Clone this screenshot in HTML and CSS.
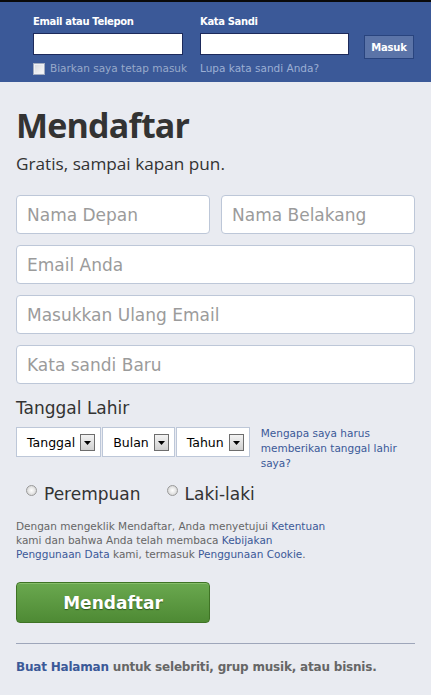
FILE: index.html
```html
<!DOCTYPE html>
<html lang="id">
<head>
<meta charset="utf-8">
<title>Mendaftar</title>
<link rel="stylesheet" href="styles.css">
</head>
<body>
<header class="topbar">
  <form class="login">
    <div class="login-col login-col-email">
      <label class="login-label">Email atau Telepon</label>
      <input class="login-input" type="text">
      <div class="keep">
        <span class="keep-box"></span>
        <span class="keep-text">Biarkan saya tetap masuk</span>
      </div>
    </div>
    <div class="login-col login-col-pass">
      <label class="login-label">Kata Sandi</label>
      <input class="login-input" type="password">
      <a class="forgot" href="#">Lupa kata sandi Anda?</a>
    </div>
    <button class="login-btn" type="button">Masuk</button>
  </form>
</header>

<main class="signup">
  <h1 class="title">Mendaftar</h1>
  <p class="subtitle">Gratis, sampai kapan pun.</p>

  <div class="fields">
    <div class="name-row">
      <input class="field" type="text" placeholder="Nama Depan">
      <input class="field" type="text" placeholder="Nama Belakang">
    </div>
    <input class="field" type="text" placeholder="Email Anda">
    <input class="field" type="text" placeholder="Masukkan Ulang Email">
    <input class="field" type="password" placeholder="Kata sandi Baru">
  </div>

  <h2 class="birth-title">Tanggal Lahir</h2>
  <div class="birth-row">
    <div class="selects">
      <div class="sel"><span>Tanggal</span><svg class="arrow" width="15" height="17" viewBox="0 0 15 17"><defs><linearGradient id="ag" x1="0" y1="0" x2="0" y2="1"><stop offset="0" stop-color="#f4f4f4"/><stop offset="1" stop-color="#cfcfcf"/></linearGradient></defs><rect x="0.5" y="0.5" width="14" height="16" fill="url(#ag)" stroke="#6d6d6d"/><path d="M4 7h7l-3.5 4z" fill="#000"/></svg></div>
      <div class="sel"><span>Bulan</span><svg class="arrow" width="15" height="17" viewBox="0 0 15 17"><rect x="0.5" y="0.5" width="14" height="16" fill="url(#ag)" stroke="#6d6d6d"/><path d="M4 7h7l-3.5 4z" fill="#000"/></svg></div>
      <div class="sel"><span>Tahun</span><svg class="arrow" width="15" height="17" viewBox="0 0 15 17"><rect x="0.5" y="0.5" width="14" height="16" fill="url(#ag)" stroke="#6d6d6d"/><path d="M4 7h7l-3.5 4z" fill="#000"/></svg></div>
    </div>
    <a class="why" href="#">Mengapa saya harus memberikan tanggal lahir saya?</a>
  </div>

  <div class="gender">
    <label class="radio"><span class="radio-dot"></span><span>Perempuan</span></label>
    <label class="radio"><span class="radio-dot"></span><span>Laki-laki</span></label>
  </div>

  <p class="terms">Dengan mengeklik Mendaftar, Anda menyetujui <a href="#">Ketentuan</a> kami dan bahwa Anda telah membaca <a href="#">Kebijakan Penggunaan Data</a> kami, termasuk <a href="#">Penggunaan Cookie</a>.</p>

  <button class="submit" type="button">Mendaftar</button>

  <hr class="divider">

  <p class="pages"><a href="#">Buat Halaman</a> untuk selebriti, grup musik, atau bisnis.</p>
</main>
</body>
</html>
```

FILE: styles.css
```css
html {
  background: #e9ebf1;
}
body {
  margin: 0;
  background: #e9ebf1;
  font-family: "DejaVu Sans", Verdana, sans-serif;
  color: #333;
}
a {
  text-decoration: none;
  color: #3b5998;
}

/* ---------- top bar ---------- */
.topbar {
  background: #3b5998;
  border-top: 2px solid #0a0a0a;
  height: 82px;
  box-sizing: border-box;
  padding: 14px 0 0 33px;
}
.login {
  display: flex;
  align-items: flex-start;
}
.login-col {
  display: flex;
  flex-direction: column;
}
.login-col-email {
  width: 150px;
  margin-right: 17px;
}
.login-col-pass {
  width: 149px;
  margin-right: 15px;
}
.login-label {
  font-weight: bold;
  font-size: 10px;
  letter-spacing: -0.35px;
  line-height: 12px;
  color: #fff;
  margin-bottom: 5px;
}
.login-input {
  box-sizing: border-box;
  width: 100%;
  height: 22px;
  margin: 0;
  border: 1px solid #1d2a5b;
  background: #fff;
  padding: 0 3px;
}
.keep {
  display: flex;
  align-items: center;
  margin-top: 7px;
  gap: 5px;
  white-space: nowrap;
}
.keep-box {
  flex: none;
  width: 12px;
  height: 12px;
  box-sizing: border-box;
  border: 1px solid #a3acbf;
  background: linear-gradient(135deg, #d7d9de, #fbfbfb);
  box-shadow: inset 0 0 0 1px #eef0f4;
}
.keep-text,
.forgot {
  font-size: 10.5px;
  line-height: 13px;
  color: #98a9ca;
  white-space: nowrap;
}
.forgot {
  margin-top: 7px;
  color: #9cafd4;
}
.login-btn {
  margin: 19px 0 0;
  width: 50px;
  height: 24px;
  box-sizing: border-box;
  border: 1px solid #29447e;
  background: #5b74a8;
  color: #fff;
  font-family: "DejaVu Sans", Verdana, sans-serif;
  font-weight: bold;
  font-size: 10px;
  letter-spacing: -0.2px;
  padding: 0;
}

/* ---------- sign-up ---------- */
.signup {
  padding: 0 16px 0 16px;
}
.title {
  margin: 26px 0 0;
  font-family: "Open Sans", sans-serif;
  font-weight: bold;
  font-size: 34px;
  line-height: 34px;
  letter-spacing: -0.8px;
  color: #333;
}
.subtitle {
  margin: 12px 0 0;
  font-family: "Open Sans", sans-serif;
  font-size: 17.2px;
  line-height: 20px;
  color: #333;
}
.fields {
  margin-top: 21px;
  display: flex;
  flex-direction: column;
  gap: 11px;
}
.name-row {
  display: grid;
  grid-template-columns: 1fr 1fr;
  gap: 11px;
}
.field {
  box-sizing: border-box;
  width: 100%;
  height: 39px;
  margin: 0;
  border: 1px solid #bdc7d8;
  border-radius: 4px;
  background: #fff;
  padding: 0 10px;
  font-family: "DejaVu Sans", Verdana, sans-serif;
  font-size: 17px;
  color: #333;
}
.field::placeholder {
  color: #9b9b9b;
  opacity: 1;
}

.birth-title {
  margin: 14px 0 0;
  font-weight: normal;
  font-size: 17px;
  line-height: 20px;
  color: #333;
}
.birth-row {
  margin-top: 9px;
  display: flex;
  align-items: flex-start;
  gap: 11px;
}
.selects {
  display: flex;
}
.sel {
  display: flex;
  align-items: center;
  gap: 5px;
  height: 30px;
  box-sizing: border-box;
  border: 1px solid #bdc7d8;
  background: #fff;
  padding: 0 5px 0 10px;
  font-size: 12.5px;
  color: #000;
}
.sel + .sel {
  margin-left: 1px;
}
.arrow {
  display: block;
}
.why {
  width: 152px;
  font-size: 10.5px;
  line-height: 15px;
  margin-top: -1px;
}

.gender {
  margin-top: 13px;
  display: flex;
  gap: 26px;
  padding-left: 10px;
}
.radio {
  display: flex;
  align-items: flex-start;
  gap: 7px;
  font-size: 17px;
  line-height: 20px;
  color: #333;
}
.radio-dot {
  width: 11px;
  height: 11px;
  box-sizing: border-box;
  margin-top: 1px;
  border-radius: 50%;
  border: 1px solid #9a9a9a;
  background: radial-gradient(circle at 50% 50%, #ffffff 0, #eeeeee 35%, #c9c9c9 100%);
}

.terms {
  margin: 15px 0 0;
  width: 318px;
  font-size: 10.5px;
  line-height: 14px;
  color: #666;
}

.submit {
  margin-top: 21px;
  width: 194px;
  height: 41px;
  box-sizing: border-box;
  border: 1px solid #3f7325;
  border-radius: 4px;
  background: linear-gradient(#6aa84f, #4e8a34);
  box-shadow: inset 0 1px 0 #86bd6b;
  color: #fff;
  font-family: "DejaVu Sans", Verdana, sans-serif;
  font-weight: bold;
  font-size: 17px;
  text-shadow: 0 1px 1px rgba(20, 50, 10, 0.6);
  padding: 0;
}

.divider {
  margin: 20px 0 0;
  border: 0;
  height: 1px;
  background: #9ea6ba;
}

.pages {
  margin: 16px 0 0;
  font-weight: bold;
  font-size: 12px;
  letter-spacing: -0.2px;
  line-height: 15px;
  color: #666;
}
```
